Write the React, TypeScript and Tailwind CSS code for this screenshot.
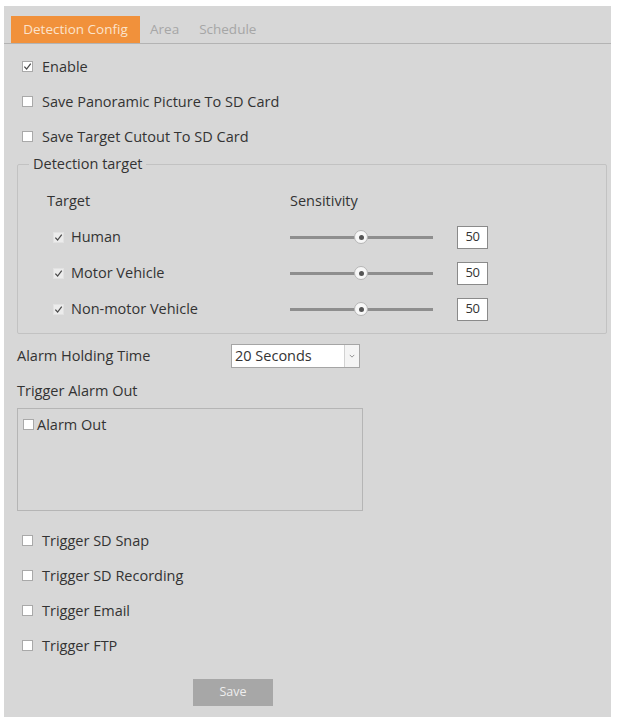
import type { ReactNode } from "react";

function Box({ checked, faint }: { checked?: boolean; faint?: boolean }) {
  return (
    <span
      className={`flex h-[11px] w-[11px] shrink-0 items-center justify-center border ${
        faint ? "border-[#e2e2e2] bg-[#ececec]" : "border-[#a9a9a9] bg-white"
      }`}
    >
      {checked && (
        <svg viewBox="0 0 10 10" className="h-[9px] w-[9px]">
          <path d="M1.5 5.2 L4 7.8 L8.6 1.8" fill="none" stroke="#4a4a4a" strokeWidth="1.4" />
        </svg>
      )}
    </span>
  );
}

function CheckRow({ label, checked, faint }: { label: string; checked?: boolean; faint?: boolean }) {
  return (
    <div className="flex h-[35px] items-center gap-[9px] pl-[5px]">
      <Box checked={checked} faint={faint} />
      <span>{label}</span>
    </div>
  );
}

function Slider() {
  return (
    <div className="relative flex h-[14px] w-[143px] items-center">
      <div className="h-[3px] w-full bg-[#8e8e8e]" />
      <span className="absolute left-[64px] flex h-[14px] w-[14px] items-center justify-center rounded-full border border-[#b5b5b5] bg-[#f7f7f7]">
        <span className="h-[5px] w-[5px] rounded-full bg-[#555]" />
      </span>
    </div>
  );
}

function TargetRow({ label }: { label: string }) {
  return (
    <div className="flex h-[36px] items-center">
      <div className="flex w-[243px] items-center gap-[7px] pl-[6px]">
        <Box checked faint />
        <span>{label}</span>
      </div>
      <Slider />
      <div className="ml-[24px] flex h-[23px] w-[31px] items-center justify-center border border-[#8a8a8a] bg-white text-[13px] tracking-[-0.5px]">
        50
      </div>
    </div>
  );
}

function Tab({ children, active }: { children: ReactNode; active?: boolean }) {
  return (
    <div
      className={`flex h-[27px] items-center text-[13.5px] ${
        active ? "w-[129px] justify-center bg-[#f1913b] text-[#fbe3cc]" : "px-[10px] text-[#a6a6a6]"
      }`}
    >
      {children}
    </div>
  );
}

export default function App() {
  return (
    <div className="min-h-[717px] bg-white pl-[4px] pt-[6px] font-['Open_Sans',sans-serif] text-[14.5px] text-[#333333]">
      <div className="min-h-[711px] w-[607px] bg-[#d7d7d7]">
        <div className="flex h-[38px] items-end border-b border-[#b3b3b3] pl-[7px]">
          <Tab active>Detection Config</Tab>
          <Tab>Area</Tab>
          <Tab>Schedule</Tab>
        </div>

        <div className="pl-[13px] pr-[4px]">
          <div className="mt-[5px]">
            <CheckRow label="Enable" checked />
            <CheckRow label="Save Panoramic Picture To SD Card" />
            <CheckRow label="Save Target Cutout To SD Card" />
          </div>

          <fieldset className="rounded-[2px] border border-[#c2c2c2] pb-[6px] pl-[29px]">
            <legend className="-ml-[18px] px-[4px] leading-[20px]">Detection target</legend>
            <div className="pt-[9px]">
              <div className="flex h-[36px] items-center">
                <span className="w-[243px]">Target</span>
                <span>Sensitivity</span>
              </div>
              <TargetRow label="Human" />
              <TargetRow label="Motor Vehicle" />
              <TargetRow label="Non-motor Vehicle" />
            </div>
          </fieldset>

          <div className="mt-[4px] flex h-[36px] items-center">
            <span className="w-[214px]">Alarm Holding Time</span>
            <div className="flex h-[24px] w-[129px] items-center border border-[#a5a5a5] bg-white">
              <span className="flex-1 pl-[3px]">20 Seconds</span>
              <span className="flex h-full w-[15px] items-center justify-center border-l border-[#d2d2d2] bg-[#f4f4f4]">
                <svg viewBox="0 0 8 5" className="h-[4px] w-[6px]">
                  <path d="M1 1 L4 4 L7 1" fill="none" stroke="#888" strokeWidth="1.2" />
                </svg>
              </span>
            </div>
          </div>

          <div className="flex h-[34px] items-center">Trigger Alarm Out</div>
          <div className="h-[103px] w-[346px] border border-[#b5b5b5] pl-[5px] pt-[5px]">
            <div className="flex items-center gap-[3px]">
              <Box />
              <span>Alarm Out</span>
            </div>
          </div>

          <div className="mt-[12px]">
            <CheckRow label="Trigger SD Snap" />
            <CheckRow label="Trigger SD Recording" />
            <CheckRow label="Trigger Email" />
            <CheckRow label="Trigger FTP" />
          </div>

          <button
            type="button"
            className="ml-[176px] mt-[16px] h-[27px] w-[80px] bg-[#a7a7a7] text-[12.5px] text-[#eeeeee]"
          >
            Save
          </button>
        </div>
      </div>
    </div>
  );
}
